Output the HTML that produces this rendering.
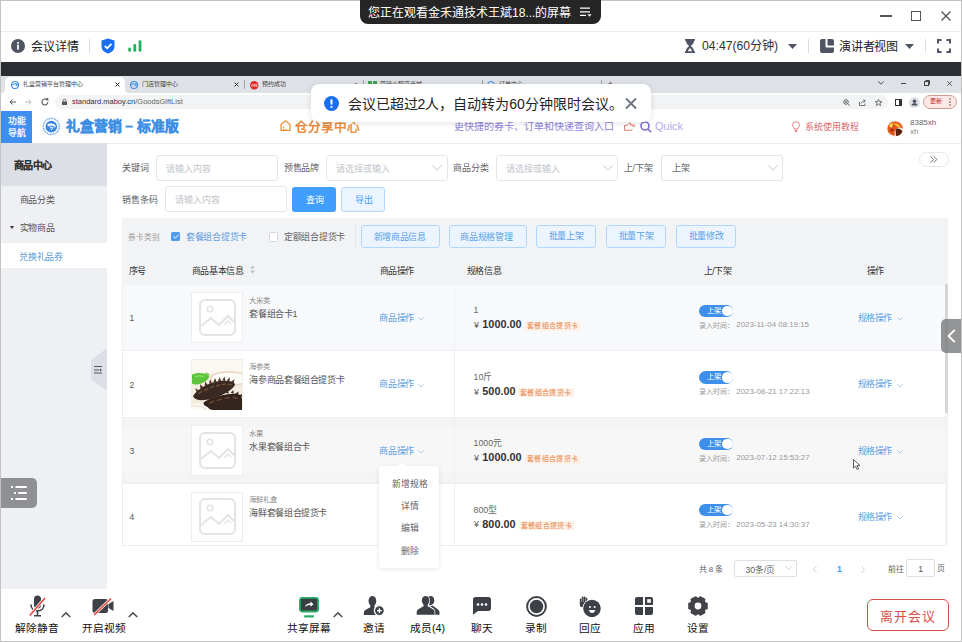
<!DOCTYPE html>
<html lang="zh-CN"><head><meta charset="utf-8">
<style>
*{margin:0;padding:0;box-sizing:border-box}
html,body{width:962px;height:642px;overflow:hidden;background:#fff;font-family:"Liberation Sans",sans-serif;color:#333}
.a{position:absolute}
.t{position:absolute;white-space:nowrap;line-height:1}
svg{position:absolute;overflow:visible}
</style></head><body>
<div class="a" id="root" style="left:0;top:0;width:962px;height:642px;overflow:hidden">

<!-- ===== title bar ===== -->
<div class="a" style="left:0;top:0;width:962px;height:31px;background:#fff"></div>
<div class="a" style="left:0;top:31px;width:962px;height:1px;background:#ececec"></div>
<div class="a" style="left:0;top:0;width:962px;height:1px;background:#c3c3c3"></div>
<div class="a" style="left:360px;top:0;width:241px;height:24px;background:#262626;border-radius:0 0 8px 8px"></div>
<div class="t" id="tabtxt" style="left:368px;top:7.00px;font-size:12px;color:#fff">您正在观看金禾通技术王斌18...的屏幕</div>
<svg style="left:580px;top:7px" width="12" height="10" viewBox="0 0 12 10"><path d="M0 1.2H10M0 4.8H10M0 8.4H6" stroke="#fff" stroke-width="1.3"/><path d="M7.5 7.2L11.5 7.2L9.5 9.8Z" fill="#fff"/></svg>
<!-- window controls -->
<div class="a" style="left:880px;top:15px;width:12px;height:1.5px;background:#555"></div>
<div class="a" style="left:911px;top:11px;width:10px;height:10px;border:1.5px solid #555"></div>
<svg style="left:941px;top:11px" width="10" height="10" viewBox="0 0 10 10"><path d="M0.5 0.5L9.5 9.5M9.5 0.5L0.5 9.5" stroke="#555" stroke-width="1.4"/></svg>

<!-- ===== info bar ===== -->
<svg style="left:11px;top:39px" width="14" height="14" viewBox="0 0 14 14"><circle cx="7" cy="7" r="7" fill="#4f5563"/><rect x="6.1" y="5.6" width="1.8" height="5" fill="#fff"/><rect x="6.1" y="3" width="1.8" height="1.7" fill="#fff"/></svg>
<div class="t" id="huiyi" style="left:31.36px;top:41px;font-size:12px;color:#222;letter-spacing:-0.2px">会议详情</div>
<div class="a" style="left:89px;top:39px;width:1px;height:14px;background:#dcdcdc"></div>
<svg style="left:101px;top:38px" width="14" height="16" viewBox="0 0 14 16"><path d="M7 0.5L13.5 2.5V8.5C13.5 12 10.5 14.5 7 15.5C3.5 14.5 0.5 12 0.5 8.5V2.5Z" fill="#1a6ef2"/><path d="M3.8 8L6.2 10.3L10.4 5.8" stroke="#fff" stroke-width="1.8" fill="none"/></svg>
<svg style="left:128px;top:40px" width="14" height="12" viewBox="0 0 14 12"><rect x="0.2" y="7.5" width="2.8" height="4.3" rx="1.4" fill="#20b25c"/><rect x="5.4" y="4" width="2.8" height="7.8" rx="1.4" fill="#20b25c"/><rect x="10.6" y="0.2" width="2.8" height="11.6" rx="1.4" fill="#20b25c"/></svg>

<svg style="left:685px;top:39px" width="10" height="14" viewBox="0 0 10 14"><path d="M0 0H10V1.8H9C9 5 6.5 6 6 7C6.5 8 9 9 9 12.2H10V14H0V12.2H1C1 9 3.5 8 4 7C3.5 6 1 5 1 1.8H0Z" fill="#4f5563"/><path d="M3 12.2C3.3 10.5 4.5 9.6 5 9.3C5.5 9.6 6.7 10.5 7 12.2Z" fill="#fff"/></svg>
<div class="t" id="timer" style="left:702px;top:40px;font-size:12.2px;color:#333">04:47(60分钟)</div>
<svg style="left:788px;top:44px" width="9" height="5" viewBox="0 0 9 5"><path d="M0 0H9L4.5 5Z" fill="#4f5563"/></svg>
<div class="a" style="left:808px;top:39px;width:1px;height:14px;background:#dcdcdc"></div>
<svg style="left:820px;top:39px" width="14" height="14" viewBox="0 0 14 14"><path d="M2 0H5.5V7.5C5.5 8 6 8.5 6.5 8.5H14V12C14 13.1 13.1 14 12 14H2C0.9 14 0 13.1 0 12V2C0 0.9 0.9 0 2 0Z" fill="#4f5563"/><path d="M7.5 0H12C13.1 0 14 0.9 14 2V6.5H7.5Z" fill="#4f5563"/></svg>
<div class="t" id="speaker" style="left:838.76px;top:40.8px;font-size:12px;color:#222;letter-spacing:-0.1px">演讲者视图</div>
<svg style="left:905px;top:44px" width="9" height="5" viewBox="0 0 9 5"><path d="M0 0H9L4.5 5Z" fill="#4f5563"/></svg>
<div class="a" style="left:925px;top:39px;width:1px;height:14px;background:#dcdcdc"></div>
<svg style="left:937px;top:39px" width="14" height="14" viewBox="0 0 14 14"><path d="M1 4.5V1H4.5M9.5 1H13V4.5M13 9.5V13H9.5M4.5 13H1V9.5" stroke="#4f5563" stroke-width="2" fill="none"/></svg>

<!-- ===== dark bar ===== -->
<div class="a" style="left:0;top:62px;width:962px;height:14px;background:#2a2d31"></div>

<!-- ===== browser ===== -->
<div class="a" style="left:0;top:76px;width:962px;height:17px;background:#dee1e6"></div>
<div class="a" style="left:5px;top:77px;width:120px;height:16px;background:#fff;border-radius:5px 5px 0 0"></div>
<div class="a" style="left:1px;top:87px;width:4px;height:6px;background:#fff"></div>
<div class="a" style="left:1px;top:85px;width:4px;height:8px;background:#dee1e6;border-radius:0 0 4px 0"></div>
<div class="a" style="left:125px;top:87px;width:4px;height:6px;background:#fff"></div>
<div class="a" style="left:125px;top:85px;width:5px;height:8px;background:#dee1e6;border-radius:0 0 0 4px"></div>
<svg style="left:11px;top:81px" width="8" height="8" viewBox="0 0 8 8"><circle cx="4" cy="4" r="3.5" fill="none" stroke="#3b8ee8" stroke-width="1.2"/><path d="M1.5 4.2C2.5 2.5 5 2.3 6.5 3.6L4.6 4.8" stroke="#3b8ee8" stroke-width="1.2" fill="none"/></svg>
<div class="t" id="tab1" style="left:23px;top:81px;font-size:6px;color:#444">礼盒营销平台管理中心</div>
<svg style="left:115px;top:82px" width="5" height="5" viewBox="0 0 5 5"><path d="M0.5 0.5L4.5 4.5M4.5 0.5L0.5 4.5" stroke="#333" stroke-width="1"/></svg>
<svg style="left:130px;top:81px" width="8" height="8" viewBox="0 0 8 8"><circle cx="4" cy="4" r="3.5" fill="none" stroke="#3b8ee8" stroke-width="1.2"/><path d="M1.5 4.2C2.5 2.5 5 2.3 6.5 3.6L4.6 4.8" stroke="#3b8ee8" stroke-width="1.2" fill="none"/></svg>
<div class="t" id="tab2" style="left:142px;top:81px;font-size:6px;color:#444">门店管理中心</div>
<svg style="left:234px;top:82px" width="5" height="5" viewBox="0 0 5 5"><path d="M0.5 0.5L4.5 4.5M4.5 0.5L0.5 4.5" stroke="#333" stroke-width="1"/></svg>
<div class="a" style="left:244px;top:80px;width:1px;height:9px;background:#a0a3a8"></div>
<svg style="left:249.7px;top:80.7px" width="8.5" height="8.5" viewBox="0 0 8.5 8.5"><circle cx="4.25" cy="4.25" r="4.25" fill="#e02b2b"/><path d="M1.8 5.6V3.6M1.8 4C2.2 3.3 3.3 3.3 3.3 4.2V5.6M3.3 4C3.7 3.3 4.8 3.3 4.8 4.2V5.6M7 4.2A1 1 0 1 0 7 4.3V5.6" stroke="#fff" stroke-width="0.6" fill="none"/></svg>
<div class="t" id="tab3" style="left:262px;top:81px;font-size:6px;color:#444">预约成功</div>
<div class="t" style="left:354px;top:81px;font-size:6px;color:#444">×</div>
<div class="a" style="left:363px;top:80px;width:1px;height:9px;background:#a0a3a8"></div>
<svg style="left:368px;top:80.5px" width="9" height="9" viewBox="0 0 9 9"><rect x="0" y="0" width="4" height="4" rx="0.6" fill="#3aa64a"/><rect x="5" y="0" width="4" height="4" rx="0.6" fill="#3aa64a"/><rect x="0" y="5" width="4" height="4" rx="0.6" fill="#3aa64a"/><rect x="5" y="5" width="4" height="4" rx="0.6" fill="#8bc34a"/></svg>
<div class="t" style="left:380px;top:81px;font-size:6px;color:#444">营销小程序商城</div>
<div class="a" style="left:482px;top:80px;width:1px;height:9px;background:#a0a3a8"></div>
<div class="a" style="left:487px;top:81px;width:8px;height:8px;border:1.2px solid #3b8ee8;border-radius:50%"></div>
<div class="t" style="left:499px;top:81px;font-size:6px;color:#444">订单中心</div>
<div class="a" style="left:601px;top:80px;width:1px;height:9px;background:#a0a3a8"></div>
<div class="t" style="left:608px;top:80px;font-size:8px;color:#444">+</div>
<svg style="left:878px;top:81px" width="6" height="4" viewBox="0 0 6 4"><path d="M0.3 0.3L3 3.2L5.7 0.3" stroke="#444" stroke-width="0.9" fill="none"/></svg>
<div class="a" style="left:901px;top:83px;width:5px;height:1px;background:#444"></div>
<svg style="left:924px;top:80px" width="6" height="6" viewBox="0 0 6 6"><rect x="0.5" y="1.5" width="4" height="4" fill="none" stroke="#444" stroke-width="1"/><path d="M1.5 0.5H5.5V4.5" fill="none" stroke="#444" stroke-width="1"/></svg>
<svg style="left:947px;top:81px" width="5" height="5" viewBox="0 0 5 5"><path d="M0.3 0.3L4.7 4.7M4.7 0.3L0.3 4.7" stroke="#444" stroke-width="0.9"/></svg>

<!-- toolbar -->
<div class="a" style="left:0;top:93px;width:962px;height:17px;background:#fff"></div>
<svg style="left:9px;top:99px" width="7" height="6" viewBox="0 0 7 6"><path d="M7 3H1M3.5 0.5L1 3L3.5 5.5" stroke="#555" stroke-width="1" fill="none"/></svg>
<svg style="left:25px;top:99px" width="7" height="6" viewBox="0 0 7 6"><path d="M0 3H6M3.5 0.5L6 3L3.5 5.5" stroke="#bbb" stroke-width="1" fill="none"/></svg>
<svg style="left:40.5px;top:98px" width="8" height="8" viewBox="0 0 8 8"><path d="M6.2 2A3 3 0 1 0 6.9 4.3" stroke="#555" stroke-width="1.1" fill="none"/><path d="M4.4 0.3H7.3V3.2Z" fill="#555"/></svg>
<div class="a" style="left:55px;top:95px;width:833px;height:14px;background:#f1f3f4;border-radius:7px"></div>
<svg style="left:62px;top:99px" width="5" height="6" viewBox="0 0 5 6"><rect x="0" y="2.5" width="5" height="3.5" rx="0.5" fill="#555"/><path d="M1 2.6V1.8A1.5 1.5 0 0 1 4 1.8V2.6" stroke="#555" stroke-width="0.9" fill="none"/></svg>
<div class="t" id="url" style="left:72px;top:98px;font-size:7.5px;color:#333">standard.maboy.cn<span style="color:#666">/GoodsGiftList</span></div>
<svg style="left:843px;top:99px" width="7" height="7" viewBox="0 0 7 7"><circle cx="3" cy="3" r="2.3" stroke="#555" stroke-width="0.9" fill="none"/><path d="M4.7 4.7L6.8 6.8M2 3H4M3 2V4" stroke="#555" stroke-width="0.8"/></svg>
<svg style="left:859px;top:99px" width="7" height="7" viewBox="0 0 7 7"><path d="M0.5 3V6.5H6V4.5M2 4.5C2.5 2.5 4 2 6 2M4.5 0.5L6.3 2L4.5 3.5" stroke="#555" stroke-width="0.8" fill="none"/></svg>
<svg style="left:875px;top:99px" width="7" height="7" viewBox="0 0 7 7"><path d="M3.5 0.3L4.4 2.5L6.8 2.6L4.9 4.1L5.6 6.6L3.5 5.2L1.4 6.6L2.1 4.1L0.2 2.6L2.6 2.5Z" stroke="#555" stroke-width="0.8" fill="none"/></svg>
<svg style="left:895px;top:99px" width="7" height="7" viewBox="0 0 7 7"><rect x="0.5" y="0.5" width="6" height="6" stroke="#333" stroke-width="1" fill="none"/><rect x="4" y="0.5" width="2.5" height="6" fill="#333"/></svg>
<div class="a" style="left:909px;top:96.5px;width:11px;height:11px;background:#dfe1e5;border-radius:50%"></div>
<svg style="left:909px;top:96.5px" width="11" height="11" viewBox="0 0 11 11"><circle cx="5.5" cy="4.2" r="1.8" fill="#4a5160"/><path d="M2.3 8.5C2.8 6.8 4 6.3 5.5 6.3C7 6.3 8.2 6.8 8.7 8.5Z" fill="#4a5160"/></svg>
<div class="a" style="left:923px;top:95px;width:34px;height:14px;background:#fce8e6;border:1px solid #d49a94;border-radius:7px"></div>
<div class="t" style="left:930px;top:98px;font-size:6px;color:#c5221f">更新</div>
<svg style="left:949px;top:98px" width="2" height="8" viewBox="0 0 2 8"><circle cx="1" cy="1" r="0.8" fill="#555"/><circle cx="1" cy="4" r="0.8" fill="#555"/><circle cx="1" cy="7" r="0.8" fill="#555"/></svg>

<!-- page header -->
<div class="a" style="left:0;top:110px;width:962px;height:33px;background:#fff"></div>
<div class="a" style="left:0;top:143px;width:962px;height:1px;background:#e8eaee"></div>
<div class="a" style="left:1px;top:111px;width:31px;height:32px;background:#3e8ef0"></div>
<div class="t" id="gn1" style="left:7.5px;top:116.8px;font-size:8.8px;color:#fff;-webkit-text-stroke:0.25px #fff">功能</div>
<div class="t" id="gn2" style="left:7.5px;top:129.48px;font-size:8.8px;color:#fff;-webkit-text-stroke:0.25px #fff">导航</div>
<svg style="left:41.5px;top:117px" width="19" height="19" viewBox="0 0 19 19"><circle cx="9.3" cy="9.4" r="8" fill="none" stroke="#5d9fe8" stroke-width="1.5" stroke-dasharray="0.9 0.7"/><circle cx="9.3" cy="9.6" r="5.8" fill="#3a87e2"/><path d="M5.2 7.8C6.5 6.3 9.5 5.9 12.2 7.2C13.5 8 14 9.3 13.4 10.6L11.5 9.2C10 8.3 8 8.2 6.2 9.4Z" fill="#fff"/><path d="M7.6 9.6L9.6 13.6L11.6 10.2Z" fill="#fff"/><path d="M8.6 10.4L9.6 12.6L10.6 10.8Z" fill="#3a87e2"/></svg>
<div class="t" id="title" style="left:65.5px;top:120px;font-size:13.8px;font-weight:bold;color:#3e8ee6;-webkit-text-stroke:0.4px #3e8ee6">礼盒营销 – 标准版</div>
<svg style="left:280px;top:120px" width="11" height="11" viewBox="0 0 11 11"><path d="M1 10.5V4.5L5.5 0.8L10 4.5V10.5Z" stroke="#ea8a2e" stroke-width="1.2" fill="none"/><rect x="3" y="6.5" width="1.3" height="1.3" fill="#ea8a2e"/><rect x="3" y="8.8" width="1.3" height="1.3" fill="#ea8a2e"/><rect x="5.3" y="8.8" width="1.3" height="1.3" fill="#ea8a2e"/></svg>
<div class="t" id="cfx" style="left:295px;top:120.5px;font-size:12.6px;font-weight:normal;color:transparent;-webkit-text-stroke:0.35px #ec8b3a;background:linear-gradient(90deg,#e3702c,#f0a244);-webkit-background-clip:text;background-clip:text">仓分享中心</div>
<div class="t" id="kjrk" style="left:454px;top:121.5px;font-size:10px;color:#8d82d8">更快捷的券卡、订单和快递查询入口</div>
<svg style="left:624px;top:122px" width="11" height="9" viewBox="0 0 11 9"><path d="M0.5 3.5H3L5.5 0.8C6.5 0.5 7 1.2 6.5 2.2L6 3H10C10.8 3 10.8 4.3 10 4.3H8.5M0.5 3.5V8.3H7.5C8.3 8.3 8.5 7 7.8 7" stroke="#e06a62" stroke-width="0.9" fill="none"/></svg>
<svg style="left:640px;top:121px" width="12" height="12" viewBox="0 0 12 12"><circle cx="5" cy="5" r="4" stroke="#7a6ed6" stroke-width="1.6" fill="none"/><path d="M8 8L11.2 11.2" stroke="#7a6ed6" stroke-width="1.6"/></svg>
<div class="t" id="quick" style="left:655px;top:121px;font-size:11px;color:#b3aaea">Quick</div>
<svg style="left:792px;top:122px" width="8" height="10" viewBox="0 0 8 10"><path d="M2.3 7C2.3 5.5 0.6 4.8 0.6 3.2A3.4 3.4 0 0 1 7.4 3.2C7.4 4.8 5.7 5.5 5.7 7Z" stroke="#e07070" stroke-width="0.9" fill="none"/><path d="M2.5 8.3H5.5M3 9.5H5" stroke="#e07070" stroke-width="0.9"/></svg>
<div class="t" id="xtjc" style="left:805.40px;top:123.30px;font-size:9px;color:#d9686a">系统使用教程</div>
<svg style="left:884.5px;top:119.5px" width="20" height="17" viewBox="0 0 20 17"><circle cx="10" cy="8.5" r="8.2" fill="#f3e6da"/><path d="M2.5 9C2.5 4.5 6 1.2 10.5 1.4C14.5 1.6 17.8 4.5 17.8 8.8C16.5 7.5 14.5 7 12.5 7.8C10 8.8 9 11.5 10 15.5C6 15.5 2.5 13 2.5 9Z" fill="#e2561c"/><path d="M8.5 3.5C11 2.8 14.5 4 15.8 6.5L12 7Z" fill="#f8b030"/><path d="M10.5 9C13 8 16 9 17.5 11.5C16 14.5 13.5 16 11 16Z" fill="#5a1e0c"/><path d="M4 6C5 4 7 3 8.5 3.5L6.5 8Z" fill="#fcd860"/><circle cx="7" cy="10" r="1.8" fill="#b03010"/></svg>
<div class="t" id="u1" style="left:910px;top:118.5px;font-size:8px;color:#666">8385xh</div>
<div class="t" id="u2" style="left:910px;top:128px;font-size:8px;color:#888">xh</div>

<!-- sidebar -->
<div class="a" style="left:1px;top:143px;width:106px;height:446px;background:#eff0f3"></div>
<div class="a" style="left:1px;top:143px;width:106px;height:43px;background:#dcdfe6"></div>
<div class="t" id="sbh" style="left:13.5px;top:161.3px;font-size:10px;font-weight:bold;color:#333;letter-spacing:-0.4px;-webkit-text-stroke:0.05px #333">商品中心</div>
<div class="t" id="sb1" style="left:19.5px;top:196px;font-size:9px;color:#555;letter-spacing:-0.3px">商品分类</div>
<svg style="left:10px;top:226px" width="4" height="3" viewBox="0 0 4 3"><path d="M0 0H4L2 3Z" fill="#333"/></svg>
<div class="t" id="sb2" style="left:19.5px;top:223.5px;font-size:9px;color:#555;letter-spacing:-0.3px">实物商品</div>
<div class="a" style="left:1px;top:243px;width:106px;height:25px;background:#fff"></div>
<div class="t" id="sb3" style="left:19.24px;top:252.5px;font-size:9px;color:#5b9bd9;letter-spacing:-0.25px">兑换礼品券</div>
<svg style="left:91px;top:348px" width="16" height="43" viewBox="0 0 16 43"><path d="M16 0V43L0 31.5V12Z" fill="#dcdfe6"/><path d="M3 18.5H11M3 22H8.5M3 25H11" stroke="#555" stroke-width="1.2"/><path d="M9 20.5L11 22L9 23.5Z" fill="#555"/></svg>
<div class="a" style="left:1px;top:478px;width:36px;height:30px;background:#8e9093;border-radius:0 5px 5px 0"></div>
<svg style="left:10px;top:486px" width="18" height="14" viewBox="0 0 18 14"><rect x="1" y="0" width="2" height="2" fill="#fff"/><rect x="5.2" y="0" width="11.8" height="2" rx="1" fill="#fff"/><rect x="4" y="6" width="2" height="2" fill="#fff"/><rect x="8" y="6" width="9" height="2" rx="1" fill="#fff"/><rect x="1" y="12" width="2" height="2" fill="#fff"/><rect x="5.2" y="12" width="11.8" height="2" rx="1" fill="#fff"/></svg>

<!-- ===== filters ===== -->
<div class="t" id="f1" style="left:122px;top:164.10px;font-size:9px;color:#606266">关键词</div>
<div class="a" style="left:156px;top:155px;width:122px;height:26px;border:1px solid #e2e5ea;border-radius:3px;background:#fff"></div>
<div class="t" id="ph1" style="left:166px;top:164.5px;font-size:9px;color:#c0c4cc">请输入内容</div>
<div class="t" id="f2" style="left:284px;top:164.18px;font-size:9px;color:#606266;letter-spacing:-0.4px">预售品牌</div>
<div class="a" style="left:326px;top:155px;width:122px;height:26px;border:1px solid #e2e5ea;border-radius:3px;background:#fff"></div>
<div class="t" id="ph2" style="left:336px;top:164.5px;font-size:9px;color:#c0c4cc">请选择或输入</div>
<svg style="left:432px;top:165px" width="10" height="6" viewBox="0 0 10 6"><path d="M0.4 0.4L5 5.2L9.6 0.4" stroke="#c0c4cc" stroke-width="0.9" fill="none"/></svg>
<div class="t" id="f3" style="left:453px;top:164.18px;font-size:9px;color:#606266">商品分类</div>
<div class="a" style="left:496px;top:155px;width:122px;height:26px;border:1px solid #e2e5ea;border-radius:3px;background:#fff"></div>
<div class="t" id="ph3" style="left:506px;top:164.5px;font-size:9px;color:#c0c4cc">请选择或输入</div>
<svg style="left:603px;top:165px" width="10" height="6" viewBox="0 0 10 6"><path d="M0.4 0.4L5 5.2L9.6 0.4" stroke="#c0c4cc" stroke-width="0.9" fill="none"/></svg>
<div class="t" id="f4" style="left:623.5px;top:163.5px;font-size:9px;color:#606266">上/下架</div>
<div class="a" style="left:661px;top:155px;width:122px;height:26px;border:1px solid #e2e5ea;border-radius:3px;background:#fff"></div>
<div class="t" id="ph4" style="left:671.5px;top:163.5px;font-size:9px;color:#606266">上架</div>
<svg style="left:768px;top:165px" width="10" height="6" viewBox="0 0 10 6"><path d="M0.4 0.4L5 5.2L9.6 0.4" stroke="#c0c4cc" stroke-width="0.9" fill="none"/></svg>
<div class="a" style="left:919px;top:152px;width:30px;height:15px;border:1px solid #e4e7ed;border-radius:8px;background:#fff"></div>
<svg style="left:930px;top:156px" width="8" height="7" viewBox="0 0 8 7"><path d="M0.5 0.3L3.5 3.5L0.5 6.7M3.8 0.3L6.8 3.5L3.8 6.7" stroke="#666" stroke-width="0.9" fill="none"/></svg>

<div class="t" id="f5" style="left:122px;top:196.08px;font-size:9px;color:#606266">销售条码</div>
<div class="a" style="left:165px;top:186px;width:122px;height:26px;border:1px solid #e2e5ea;border-radius:3px;background:#fff"></div>
<div class="t" id="ph5" style="left:175px;top:195.5px;font-size:9px;color:#c0c4cc">请输入内容</div>
<div class="a" style="left:292px;top:187px;width:44px;height:25px;background:#409eff;border-radius:3px"></div>
<div class="t" id="b1" style="left:305.5px;top:195.5px;font-size:9px;color:#fff">查询</div>
<div class="a" style="left:341px;top:187px;width:44px;height:25px;background:#ecf5ff;border:1px solid #b3d8ff;border-radius:3px"></div>
<div class="t" id="b2" style="left:354.5px;top:195.5px;font-size:9px;color:#409eff">导出</div>

<!-- ===== gray panel ===== -->
<div class="a" style="left:122px;top:218px;width:826px;height:67px;background:#f2f3f5"></div>
<div class="t" id="qk" style="left:128px;top:233.60px;font-size:7.6px;color:#9a9a9a">券卡类别</div>
<div class="a" style="left:171px;top:232px;width:8.5px;height:8.5px;background:#4f9bec;border-radius:1.5px"></div>
<svg style="left:172.5px;top:233.5px" width="6" height="5" viewBox="0 0 6 5"><path d="M0.5 2.5L2.3 4.2L5.5 0.8" stroke="#fff" stroke-width="0.9" fill="none"/></svg>
<div class="t" id="ck1" style="left:186px;top:232.5px;font-size:9px;color:#5d9de2;letter-spacing:-0.3px">套餐组合提货卡</div>
<div class="a" style="left:268.5px;top:232px;width:9.5px;height:9.5px;background:#fff;border:1px solid #d4d7de;border-radius:1.5px"></div>
<div class="t" id="ck2" style="left:284px;top:232.5px;font-size:9px;color:#606266;letter-spacing:-0.3px">定额组合提货卡</div>
<div class="a" style="left:354.5px;top:225px;width:1px;height:22px;background:#e4e7ed"></div>
<div class="a" style="left:360.5px;top:225px;width:79px;height:23px;background:#ecf5ff;border:1px solid #b3d8ff;border-radius:3px"></div>
<div class="t" id="bb1" style="left:373.5px;top:233.10px;font-size:9px;color:#5a9fe6;letter-spacing:-0.3px">新增商品信息</div>
<div class="a" style="left:448.5px;top:225px;width:78px;height:23px;background:#ecf5ff;border:1px solid #b3d8ff;border-radius:3px"></div>
<div class="t" id="bb2" style="left:460.32px;top:233.10px;font-size:9px;color:#5a9fe6;letter-spacing:-0.3px">商品规格管理</div>
<div class="a" style="left:535.5px;top:225px;width:60px;height:23px;background:#ecf5ff;border:1px solid #b3d8ff;border-radius:3px"></div>
<div class="t" id="bb3" style="left:548.5px;top:232.3px;font-size:9px;color:#5a9fe6;letter-spacing:-0.3px">批量上架</div>
<div class="a" style="left:605.5px;top:225px;width:60px;height:23px;background:#ecf5ff;border:1px solid #b3d8ff;border-radius:3px"></div>
<div class="t" id="bb4" style="left:618.5px;top:232.3px;font-size:9px;color:#5a9fe6;letter-spacing:-0.3px">批量下架</div>
<div class="a" style="left:675.5px;top:225px;width:60px;height:23px;background:#ecf5ff;border:1px solid #b3d8ff;border-radius:3px"></div>
<div class="t" id="bb5" style="left:688.5px;top:232.3px;font-size:9px;color:#5a9fe6;letter-spacing:-0.3px">批量修改</div>

<div class="t" id="h1" style="left:128.5px;top:266.5px;font-size:9px;color:#333;letter-spacing:-0.3px">序号</div>
<div class="t" id="h2" style="left:191.5px;top:266.5px;font-size:9px;color:#333;letter-spacing:-0.3px">商品基本信息</div>
<svg style="left:249.5px;top:265px" width="5" height="9" viewBox="0 0 5 9"><path d="M0 3.6L2.5 0.3L5 3.6Z" fill="#c0c4cc"/><path d="M0 5.4L2.5 8.7L5 5.4Z" fill="#c0c4cc"/></svg>
<div class="t" id="h3" style="left:379.5px;top:266.5px;font-size:9px;color:#333;letter-spacing:-0.4px">商品操作</div>
<div class="t" id="h4" style="left:466.5px;top:267.34px;font-size:9px;color:#333;letter-spacing:-0.3px">规格信息</div>
<div class="t" id="h5" style="left:703.5px;top:266.5px;font-size:9px;color:#333;letter-spacing:-0.3px">上/下架</div>
<div class="t" id="h6" style="left:866.5px;top:267.10px;font-size:9px;color:#333;letter-spacing:-0.3px">操作</div>

<!-- ===== rows ===== -->
<div class="a" style="left:122px;top:285px;width:823px;height:66px;background:#f8f9fb;border-bottom:1px solid #edeef1"></div>
<div class="a" style="left:454px;top:285px;width:1px;height:66px;background:#eef0f4"></div>
<div class="t" id="r1_num" style="left:129.5px;top:314.0px;font-size:8.5px;color:#555">1</div>
<div class="a" style="left:191px;top:292.3px;width:51.5px;height:50.5px;background:#fff;border:1px solid #eceef1"></div>
<svg style="left:199px;top:298.8px" width="37" height="37" viewBox="0 0 37 37"><rect x="1" y="1" width="35" height="35" rx="5" fill="none" stroke="#e3e3e3" stroke-width="2"/><circle cx="11" cy="10" r="2.8" fill="none" stroke="#e3e3e3" stroke-width="1.6"/><path d="M2 27L12 19L20 26L29 17L35 23" fill="none" stroke="#e3e3e3" stroke-width="2"/><path d="M25 26L29 22L32 25" fill="none" stroke="#e3e3e3" stroke-width="1.4"/></svg>
<div class="t" id="r1_cat" style="left:249.3px;top:296.6px;font-size:7.3px;color:#8a8a8a">大米类</div>
<div class="t" id="r1_name" style="left:249.3px;top:309.5px;font-size:9px;letter-spacing:-0.35px;color:#555">套餐组合卡1</div>
<div class="t" id="r1_op" style="left:379.3px;top:313.6px;font-size:9px;letter-spacing:-0.35px;color:#5b9de3">商品操作</div>
<svg style="left:418.3px;top:317.0px" width="6" height="3.5" viewBox="0 0 6 3.5"><path d="M0.3 0.3L3 3L5.7 0.3" stroke="#8ab8ea" stroke-width="0.7" fill="none"/></svg>
<div class="t" id="r1_spec" style="left:473.5px;top:306.3px;font-size:8.8px;color:#666">1</div>
<div class="t" id="r1_yen" style="left:474px;top:321.0px;font-size:8.8px;color:#555">¥</div>
<div class="t" id="r1_price" style="left:482.3px;top:319.3px;font-size:10.9px;font-weight:bold;color:#333">1000.00</div>
<div class="a" style="left:525px;top:321.6px;width:55.5px;height:9px;background:#fdf1e8;border-radius:1px"></div>
<div class="t" id="r1_tag" style="left:527px;top:322.40000000000003px;font-size:7px;letter-spacing:0.35px;color:#e4864a">套餐组合提货卡</div>
<div class="a" style="left:699px;top:304.5px;width:34px;height:12.5px;background:#3e8fea;border-radius:6.5px"></div>
<div class="t" id="r1_sw" style="left:706.5px;top:306.5px;font-size:7.4px;color:#fff">上架</div>
<div class="a" style="left:722px;top:305.5px;width:10.5px;height:10.5px;background:#fff;border-radius:50%"></div>
<div class="t" id="r1_date" style="left:698.5px;top:321.6px;font-size:7px;color:#999">录入时间：<span style="position:absolute;left:37.8px;top:-0.3px;font-size:7.9px">2023-11-04 08:19:15</span></div>
<div class="t" id="r1_op2" style="left:857.5px;top:313.6px;font-size:9px;letter-spacing:-0.35px;color:#5b9de3">规格操作</div>
<svg style="left:897px;top:317.0px" width="6" height="3.5" viewBox="0 0 6 3.5"><path d="M0.3 0.3L3 3L5.7 0.3" stroke="#8ab8ea" stroke-width="0.7" fill="none"/></svg>
<div class="a" style="left:122px;top:351px;width:823px;height:67px;background:#ffffff;border-bottom:1px solid #edeef1"></div>
<div class="a" style="left:454px;top:351px;width:1px;height:67px;background:#eef0f4"></div>
<div class="t" id="r2_num" style="left:129.5px;top:380.59999999999997px;font-size:8.5px;color:#555">2</div>
<div class="a" style="left:191px;top:358.9px;width:51.5px;height:50.5px;background:#fff;border:1px solid #eceef1"></div>
<svg style="left:191.8px;top:359.9px;overflow:hidden" width="50" height="50" viewBox="0 0 51 51"><rect width="51" height="51" fill="#f5eee0"/><rect width="51" height="13" fill="#fbf8f1"/><ellipse cx="38" cy="19" rx="19" ry="7" fill="#fffdf8" stroke="#e6dac2" stroke-width="1.8"/><path d="M0 15C4 13 9 13 13 14C16 12 19 15 17 18C15 22 10 24 5 25C3 25 1 25 0 24Z" fill="#5cc43c"/><path d="M3 17C6 16 9 16 12 17M14 13L17 16" stroke="#8fe068" stroke-width="1.2" fill="none"/><path d="M14.5 39.5L14.8 35.6L17.5 38.5Z" fill="#3d2a22"/><path d="M19.4 37.3L20.4 33.5L22.6 36.7Z" fill="#3d2a22"/><path d="M24.4 35.5L26.0 31.9L27.6 35.5Z" fill="#3d2a22"/><path d="M29.4 34.4L31.3 30.9L32.6 34.6Z" fill="#3d2a22"/><path d="M34.4 33.7L36.6 30.5L37.6 34.3Z" fill="#3d2a22"/><path d="M39.5 33.5L42.2 30.6L42.5 34.5Z" fill="#3d2a22"/><path d="M44.2 34.1L47.6 32.1L46.8 35.9Z" fill="#3d2a22"/><path d="M48.0 35.8L51.8 34.7L50.0 38.2Z" fill="#3d2a22"/><path d="M12 43C20 38 34 34 45 34.5C50 35 51 38 51 41V51H22C15 50 11 47 12 43Z" fill="#33241e"/><path d="M18 44L22 42M26 41L30 40M34 39L38 38.5M42 38L46 39" stroke="#6a4632" stroke-width="1.6" stroke-linecap="round"/><path d="M4.8 33.0L3.3 28.8L7.2 31.0Z" fill="#4a3329"/><path d="M8.5 29.2L8.2 24.7L11.5 27.8Z" fill="#4a3329"/><path d="M13.0 26.4L13.4 21.9L16.0 25.6Z" fill="#4a3329"/><path d="M17.4 24.3L18.3 19.9L20.6 23.7Z" fill="#4a3329"/><path d="M21.9 22.5L23.5 18.3L25.1 22.5Z" fill="#4a3329"/><path d="M26.4 21.4L28.4 17.3L29.6 21.6Z" fill="#4a3329"/><path d="M30.9 20.7L33.2 16.9L34.1 21.3Z" fill="#4a3329"/><path d="M35.5 21.0L38.4 17.6L38.5 22.0Z" fill="#4a3329"/><path d="M39.7 22.1L43.4 19.6L42.3 23.9Z" fill="#4a3329"/><path d="M1 37C5 30 16 23.5 28 21.5C35 20.5 41 21 44 24.5C43 30 32 36 20 39.5C11 42 3 41.5 1 37Z" fill="#3a2923"/><path d="M7 34L10 32M13 31L16 29.5M19 28L22 27M25 26.5L28 25.5M31 25L34 24.5M37 25L40 25" stroke="#6e4a34" stroke-width="1.7" stroke-linecap="round"/><path d="M0 45C7 43 14 45 19 51H0Z" fill="#fdfbf6"/><path d="M0 47C6 46 12 48 15 51" stroke="#e2d6bf" stroke-width="1" fill="none"/></svg>
<div class="t" id="r2_cat" style="left:249.3px;top:363.2px;font-size:7.3px;color:#8a8a8a">海参类</div>
<div class="t" id="r2_name" style="left:249.3px;top:376.09999999999997px;font-size:9px;letter-spacing:-0.35px;color:#555">海参商品套餐组合提货卡</div>
<div class="t" id="r2_op" style="left:379.3px;top:380.2px;font-size:9px;letter-spacing:-0.35px;color:#5b9de3">商品操作</div>
<svg style="left:418.3px;top:383.59999999999997px" width="6" height="3.5" viewBox="0 0 6 3.5"><path d="M0.3 0.3L3 3L5.7 0.3" stroke="#8ab8ea" stroke-width="0.7" fill="none"/></svg>
<div class="t" id="r2_spec" style="left:473.5px;top:372.9px;font-size:8.8px;color:#666">10斤</div>
<div class="t" id="r2_yen" style="left:474px;top:387.59999999999997px;font-size:8.8px;color:#555">¥</div>
<div class="t" id="r2_price" style="left:482.3px;top:385.9px;font-size:10.9px;font-weight:bold;color:#333">500.00</div>
<div class="a" style="left:518px;top:388.2px;width:55.5px;height:9px;background:#fdf1e8;border-radius:1px"></div>
<div class="t" id="r2_tag" style="left:520px;top:389.0px;font-size:7px;letter-spacing:0.35px;color:#e4864a">套餐组合提货卡</div>
<div class="a" style="left:699px;top:371.09999999999997px;width:34px;height:12.5px;background:#3e8fea;border-radius:6.5px"></div>
<div class="t" id="r2_sw" style="left:706.5px;top:373.09999999999997px;font-size:7.4px;color:#fff">上架</div>
<div class="a" style="left:722px;top:372.09999999999997px;width:10.5px;height:10.5px;background:#fff;border-radius:50%"></div>
<div class="t" id="r2_date" style="left:698.5px;top:388.2px;font-size:7px;color:#999">录入时间：<span style="position:absolute;left:37.8px;top:-0.3px;font-size:7.9px">2023-08-21 17:22:13</span></div>
<div class="t" id="r2_op2" style="left:857.5px;top:380.2px;font-size:9px;letter-spacing:-0.35px;color:#5b9de3">规格操作</div>
<svg style="left:897px;top:383.59999999999997px" width="6" height="3.5" viewBox="0 0 6 3.5"><path d="M0.3 0.3L3 3L5.7 0.3" stroke="#8ab8ea" stroke-width="0.7" fill="none"/></svg>
<div class="a" style="left:122px;top:418px;width:823px;height:66px;background:#f7f7f8;border-bottom:1px solid #edeef1"></div><div class="a" style="left:122px;top:418px;width:823px;height:10px;background:#f4f4f5"></div><div class="a" style="left:122px;top:473px;width:823px;height:10px;background:#f4f4f5"></div>
<div class="a" style="left:454px;top:418px;width:1px;height:66px;background:#eef0f4"></div>
<div class="t" id="r3_num" style="left:129.5px;top:447.0px;font-size:8.5px;color:#555">3</div>
<div class="a" style="left:191px;top:425.3px;width:51.5px;height:50.5px;background:#fff;border:1px solid #eceef1"></div>
<svg style="left:199px;top:431.8px" width="37" height="37" viewBox="0 0 37 37"><rect x="1" y="1" width="35" height="35" rx="5" fill="none" stroke="#e3e3e3" stroke-width="2"/><circle cx="11" cy="10" r="2.8" fill="none" stroke="#e3e3e3" stroke-width="1.6"/><path d="M2 27L12 19L20 26L29 17L35 23" fill="none" stroke="#e3e3e3" stroke-width="2"/><path d="M25 26L29 22L32 25" fill="none" stroke="#e3e3e3" stroke-width="1.4"/></svg>
<div class="t" id="r3_cat" style="left:249.3px;top:429.6px;font-size:7.3px;color:#8a8a8a">水果</div>
<div class="t" id="r3_name" style="left:249.3px;top:442.5px;font-size:9px;letter-spacing:-0.35px;color:#555">水果套餐组合卡</div>
<div class="t" id="r3_op" style="left:379.3px;top:446.6px;font-size:9px;letter-spacing:-0.35px;color:#5b9de3">商品操作</div>
<svg style="left:418.3px;top:450.0px" width="6" height="3.5" viewBox="0 0 6 3.5"><path d="M0.3 0.3L3 3L5.7 0.3" stroke="#8ab8ea" stroke-width="0.7" fill="none"/></svg>
<div class="t" id="r3_spec" style="left:473.5px;top:439.3px;font-size:8.8px;color:#666">1000元</div>
<div class="t" id="r3_yen" style="left:474px;top:454.0px;font-size:8.8px;color:#555">¥</div>
<div class="t" id="r3_price" style="left:482.3px;top:452.3px;font-size:10.9px;font-weight:bold;color:#333">1000.00</div>
<div class="a" style="left:525px;top:454.6px;width:55.5px;height:9px;background:#fdf1e8;border-radius:1px"></div>
<div class="t" id="r3_tag" style="left:527px;top:455.40000000000003px;font-size:7px;letter-spacing:0.35px;color:#e4864a">套餐组合提货卡</div>
<div class="a" style="left:699px;top:437.5px;width:34px;height:12.5px;background:#3e8fea;border-radius:6.5px"></div>
<div class="t" id="r3_sw" style="left:706.5px;top:439.5px;font-size:7.4px;color:#fff">上架</div>
<div class="a" style="left:722px;top:438.5px;width:10.5px;height:10.5px;background:#fff;border-radius:50%"></div>
<div class="t" id="r3_date" style="left:698.5px;top:454.6px;font-size:7px;color:#999">录入时间：<span style="position:absolute;left:37.8px;top:-0.3px;font-size:7.9px">2023-07-12 15:53:27</span></div>
<div class="t" id="r3_op2" style="left:857.5px;top:446.6px;font-size:9px;letter-spacing:-0.35px;color:#5b9de3">规格操作</div>
<svg style="left:897px;top:450.0px" width="6" height="3.5" viewBox="0 0 6 3.5"><path d="M0.3 0.3L3 3L5.7 0.3" stroke="#8ab8ea" stroke-width="0.7" fill="none"/></svg>
<div class="a" style="left:122px;top:484px;width:823px;height:62px;background:#ffffff;border-bottom:1px solid #edeef1"></div>
<div class="a" style="left:454px;top:484px;width:1px;height:62px;background:#eef0f4"></div>
<div class="t" id="r4_num" style="left:129.5px;top:513.4000000000001px;font-size:8.5px;color:#555">4</div>
<div class="a" style="left:191px;top:491.70000000000005px;width:51.5px;height:50.5px;background:#fff;border:1px solid #eceef1"></div>
<svg style="left:199px;top:498.20000000000005px" width="37" height="37" viewBox="0 0 37 37"><rect x="1" y="1" width="35" height="35" rx="5" fill="none" stroke="#e3e3e3" stroke-width="2"/><circle cx="11" cy="10" r="2.8" fill="none" stroke="#e3e3e3" stroke-width="1.6"/><path d="M2 27L12 19L20 26L29 17L35 23" fill="none" stroke="#e3e3e3" stroke-width="2"/><path d="M25 26L29 22L32 25" fill="none" stroke="#e3e3e3" stroke-width="1.4"/></svg>
<div class="t" id="r4_cat" style="left:249.3px;top:496.00000000000006px;font-size:7.3px;color:#8a8a8a">海鲜礼盒</div>
<div class="t" id="r4_name" style="left:249.3px;top:508.90000000000003px;font-size:9px;letter-spacing:-0.35px;color:#555">海鲜套餐组合提货卡</div>
<div class="t" id="r4_op" style="left:379.3px;top:513.0px;font-size:9px;letter-spacing:-0.35px;color:#5b9de3">商品操作</div>
<svg style="left:418.3px;top:516.4000000000001px" width="6" height="3.5" viewBox="0 0 6 3.5"><path d="M0.3 0.3L3 3L5.7 0.3" stroke="#8ab8ea" stroke-width="0.7" fill="none"/></svg>
<div class="t" id="r4_spec" style="left:473.5px;top:505.70000000000005px;font-size:8.8px;color:#666">800型</div>
<div class="t" id="r4_yen" style="left:474px;top:520.4000000000001px;font-size:8.8px;color:#555">¥</div>
<div class="t" id="r4_price" style="left:482.3px;top:518.7px;font-size:10.9px;font-weight:bold;color:#333">800.00</div>
<div class="a" style="left:518.5px;top:521.0px;width:55.5px;height:9px;background:#fdf1e8;border-radius:1px"></div>
<div class="t" id="r4_tag" style="left:520.5px;top:521.8000000000001px;font-size:7px;letter-spacing:0.35px;color:#e4864a">套餐组合提货卡</div>
<div class="a" style="left:699px;top:503.90000000000003px;width:34px;height:12.5px;background:#3e8fea;border-radius:6.5px"></div>
<div class="t" id="r4_sw" style="left:706.5px;top:505.90000000000003px;font-size:7.4px;color:#fff">上架</div>
<div class="a" style="left:722px;top:504.90000000000003px;width:10.5px;height:10.5px;background:#fff;border-radius:50%"></div>
<div class="t" id="r4_date" style="left:698.5px;top:521.0px;font-size:7px;color:#999">录入时间：<span style="position:absolute;left:37.8px;top:-0.3px;font-size:7.9px">2023-05-23 14:30:37</span></div>
<div class="t" id="r4_op2" style="left:857.5px;top:513.0px;font-size:9px;letter-spacing:-0.35px;color:#5b9de3">规格操作</div>
<svg style="left:897px;top:516.4000000000001px" width="6" height="3.5" viewBox="0 0 6 3.5"><path d="M0.3 0.3L3 3L5.7 0.3" stroke="#8ab8ea" stroke-width="0.7" fill="none"/></svg>
<div class="a" style="left:122px;top:546px;width:827px;height:13px;background:#fff"></div><div class="a" style="left:122px;top:285px;width:1px;height:261px;background:#edeef1"></div>

<!-- scrollbar -->
<div class="a" style="left:945px;top:284px;width:3px;height:261px;background:#f2f3f5"></div>
<div class="a" style="left:945px;top:284px;width:3px;height:129px;background:#d5d6d8"></div>

<!-- popup -->
<div class="a" style="left:379px;top:466px;width:60px;height:102px;background:#fff;border-radius:3px;box-shadow:0 1px 5px rgba(0,0,0,0.10)"></div>
<svg style="left:396px;top:462px" width="12" height="5" viewBox="0 0 12 5"><path d="M0 5L6 0.5L12 5Z" fill="#fff"/></svg>
<div class="t" id="pm1" style="left:392px;top:479.8px;font-size:8.8px;color:#606266">新增规格</div>
<div class="t" id="pm2" style="left:401px;top:502.3px;font-size:8.8px;color:#606266">详情</div>
<div class="t" id="pm3" style="left:401px;top:524.3px;font-size:8.8px;color:#606266">编辑</div>
<div class="t" id="pm4" style="left:401px;top:546.80px;font-size:8.8px;color:#606266">删除</div>

<!-- pagination -->
<div class="t" id="pg1" style="left:698.5px;top:565.5px;font-size:8px;color:#606266">共 8 条</div>
<div class="a" style="left:734px;top:560px;width:63px;height:17px;border:1px solid #dcdfe6;border-radius:2px;background:#fff"></div>
<div class="t" id="pg2" style="left:745.5px;top:565.60px;font-size:8.6px;color:#606266">30条/页</div>
<svg style="left:785px;top:566px" width="7" height="4" viewBox="0 0 7 4"><path d="M0.3 0.3L3.5 3.5L6.7 0.3" stroke="#c0c4cc" stroke-width="0.8" fill="none"/></svg>
<svg style="left:813px;top:566px" width="4" height="7" viewBox="0 0 4 7"><path d="M3.5 0.3L0.5 3.5L3.5 6.7" stroke="#c0c4cc" stroke-width="0.8" fill="none"/></svg>
<div class="t" id="pg3" style="left:837px;top:565px;font-size:8.8px;font-weight:bold;color:#409eff">1</div>
<svg style="left:861px;top:566px" width="4" height="7" viewBox="0 0 4 7"><path d="M0.5 0.3L3.5 3.5L0.5 6.7" stroke="#c0c4cc" stroke-width="0.8" fill="none"/></svg>
<div class="t" id="pg4" style="left:887.5px;top:565.80px;font-size:8px;color:#606266">前往</div>
<div class="a" style="left:906px;top:559px;width:28.5px;height:17.5px;border:1px solid #dcdfe6;border-radius:2px;background:#fff"></div>
<div class="t" id="pg5" style="left:918px;top:564.3px;font-size:9.5px;color:#606266">1</div>
<div class="t" id="pg6" style="left:937px;top:565.30px;font-size:8px;color:#606266">页</div>

<!-- ===== bottom toolbar ===== -->
<div class="a" style="left:0;top:589px;width:962px;height:53px;background:#fff"></div>
<svg style="left:29px;top:595px" width="17" height="22" viewBox="0 0 17 22"><rect x="5" y="0.5" width="7" height="13" rx="3.5" fill="#3d4047"/><path d="M2 9.5C2 13.5 4.8 15.8 8.5 15.8C12.2 15.8 15 13.5 15 9.5" stroke="#3d4047" stroke-width="1.6" fill="none"/><path d="M8.5 16V20.5M5 20.8H12" stroke="#3d4047" stroke-width="1.6"/><path d="M0.8 20.5L16 3" stroke="#fff" stroke-width="3"/><path d="M0.8 20.5L16 3" stroke="#e8413c" stroke-width="1.5"/></svg>
<svg style="left:61px;top:612px" width="10" height="6" viewBox="0 0 10 6"><path d="M0.7 5L5 0.9L9.3 5" stroke="#4a4d54" stroke-width="1.5" fill="none"/></svg>
<div class="t" id="bt1" style="left:14.5px;top:622.8px;font-size:10.7px;color:#111">解除静音</div>
<svg style="left:92px;top:597px" width="23" height="19" viewBox="0 0 23 19"><rect x="0.5" y="2" width="15.5" height="14" rx="2.5" fill="#3d4047"/><path d="M16.5 7L21.5 4V14L16.5 11Z" fill="#3d4047"/><path d="M2 18L19 1.5" stroke="#fff" stroke-width="3"/><path d="M2 18L19 1.5" stroke="#e8413c" stroke-width="1.5"/></svg>
<svg style="left:128px;top:612px" width="10" height="6" viewBox="0 0 10 6"><path d="M0.7 5L5 0.9L9.3 5" stroke="#4a4d54" stroke-width="1.5" fill="none"/></svg>
<div class="t" id="bt2" style="left:82px;top:622.8px;font-size:10.7px;color:#111">开启视频</div>

<svg style="left:299px;top:596.5px" width="20" height="21" viewBox="0 0 20 21"><rect x="0.9" y="0.9" width="18.2" height="13.6" rx="2.2" fill="#3a3d42" stroke="#2aae67" stroke-width="1.8"/><path d="M6 10C6.5 7.5 8.5 6.3 11.5 6.3V4.5L14.5 7.2L11.5 9.8V8C9.5 8 7.5 8.6 6 10Z" fill="#fff"/><rect x="5" y="18.3" width="10" height="2.2" rx="1" fill="#2aae67"/></svg>
<svg style="left:333px;top:612px" width="10" height="6" viewBox="0 0 10 6"><path d="M0.7 5L5 0.9L9.3 5" stroke="#4a4d54" stroke-width="1.5" fill="none"/></svg>
<div class="t" id="bt3" style="left:287px;top:622.8px;font-size:10.7px;color:#111">共享屏幕</div>
<svg style="left:363px;top:596px" width="22" height="20" viewBox="0 0 22 20"><ellipse cx="9.4" cy="5" rx="3.9" ry="5" fill="#3d4047"/><rect x="7.3" y="7" width="4.2" height="6" fill="#3d4047"/><path d="M0.8 19V17C0.8 15.8 1.4 14.8 2.4 14.1L6.8 11.4H12L16 13.8V19Z" fill="#3d4047"/><circle cx="16.4" cy="14.6" r="5" fill="#3d4047" stroke="#fff" stroke-width="1.3"/><path d="M16.4 12.2V17M14 14.6H18.8" stroke="#fff" stroke-width="1.4"/></svg>
<div class="t" id="bt4" style="left:363px;top:622.8px;font-size:10.7px;color:#111">邀请</div>
<svg style="left:416.5px;top:596px" width="23" height="19" viewBox="0 0 23 19"><ellipse cx="13.5" cy="4.6" rx="3.8" ry="4.6" fill="#3d4047"/><path d="M9 11.5L12.5 9.5C13.5 10.5 14.5 10.5 15.5 9.5L21 13.5C22 14.3 22.5 15.5 22.5 16.5V18.8H12Z" fill="#3d4047"/><path d="M8.6 -0.65C11.3 -0.65 13.05 1.6 13.05 4.6C13.05 6.5 12.5 8 11.8 9.4L16.6 12.6C17.6 13.3 18.25 14.6 18.25 16V19.5H-0.95V16C-0.95 14.6 -0.3 13.3 0.7 12.6L5.4 9.4C4.7 8 4.15 6.5 4.15 4.6C4.15 1.6 5.9 -0.65 8.6 -0.65Z" fill="#fff"/><ellipse cx="8.6" cy="4.6" rx="3.8" ry="4.6" fill="#3d4047"/><rect x="6.5" y="7" width="4.2" height="5" fill="#3d4047"/><path d="M-0.3 18.8V16.3C-0.3 15.1 0.3 14 1.3 13.3L6 10.6H11.2L16 13.3C17 14 17.6 15.1 17.6 16.3V18.8Z" fill="#3d4047"/></svg>
<div class="t" id="bt5" style="left:410px;top:622.8px;font-size:10.7px;color:#111">成员(4)</div>
<svg style="left:473px;top:597px" width="18" height="18" viewBox="0 0 18 18"><path d="M2.5 0H15.5C16.9 0 18 1.1 18 2.5V11.5C18 12.9 16.9 14 15.5 14H5L0 17.8V2.5C0 1.1 1.1 0 2.5 0Z" fill="#3d4047"/><circle cx="5" cy="7.5" r="1.3" fill="#fff"/><circle cx="9" cy="7.5" r="1.3" fill="#fff"/><circle cx="13" cy="7.5" r="1.3" fill="#fff"/></svg>
<div class="t" id="bt6" style="left:470.5px;top:622.8px;font-size:10.7px;color:#111">聊天</div>
<svg style="left:526px;top:595.5px" width="21" height="21" viewBox="0 0 21 21"><circle cx="10.5" cy="10.5" r="9.4" fill="none" stroke="#3d4047" stroke-width="2"/><circle cx="10.5" cy="10.5" r="6.8" fill="#3d4047"/></svg>
<div class="t" id="bt7" style="left:524.5px;top:622.8px;font-size:10.7px;color:#111">录制</div>
<svg style="left:579px;top:595.5px" width="23" height="22" viewBox="0 0 23 22"><g fill="#3d4047"><rect x="0.9" y="2.4" width="1.6" height="7" rx="0.8"/><rect x="2.8" y="0.6" width="1.7" height="8" rx="0.85"/><rect x="4.8" y="0.5" width="1.7" height="8" rx="0.85"/><rect x="6.7" y="1.8" width="1.6" height="7" rx="0.8"/><path d="M0.9 6H8.3L9 9L7 11.3H3.2C1.9 11.3 0.9 10.3 0.9 9Z"/></g><circle cx="13" cy="12.4" r="9.55" fill="#fff"/><circle cx="13" cy="12.4" r="8.75" fill="#3d4047"/><circle cx="11" cy="11" r="1" fill="#fff"/><circle cx="15.6" cy="11" r="1" fill="#fff"/><path d="M9.8 14C10.4 16 11.6 16.9 13.1 16.9C14.6 16.9 15.8 16 16.4 14Z" fill="#fff"/></svg>
<div class="t" id="bt8" style="left:579px;top:622.8px;font-size:10.7px;color:#111">回应</div>
<svg style="left:635px;top:597px" width="18" height="18" viewBox="0 0 18 18"><path d="M2 0H8V8H0V2C0 0.9 0.9 0 2 0Z" fill="#3d4047"/><path d="M0 10H8V18H2C0.9 18 0 17.1 0 16Z" fill="#3d4047"/><path d="M10 10H18V16C18 17.1 17.1 18 16 18H10Z" fill="#3d4047"/><path d="M10 0H16C17.1 0 18 0.9 18 2V8H10Z" fill="#3d4047"/><rect x="12.2" y="2.2" width="3.6" height="3.6" fill="#fff"/></svg>
<div class="t" id="bt9" style="left:633px;top:623.44px;font-size:10.7px;color:#111">应用</div>
<svg style="left:688.2px;top:595.5px" width="20" height="20" viewBox="0 0 20 20"><g transform="translate(10,10)" fill="#414348"><circle r="8.6"/><rect x="-3.6" y="-9.8" width="7.2" height="5" rx="1.4" transform="rotate(30)"/><rect x="-3.6" y="-9.8" width="7.2" height="5" rx="1.4" transform="rotate(90)"/><rect x="-3.6" y="-9.8" width="7.2" height="5" rx="1.4" transform="rotate(150)"/><rect x="-3.6" y="-9.8" width="7.2" height="5" rx="1.4" transform="rotate(210)"/><rect x="-3.6" y="-9.8" width="7.2" height="5" rx="1.4" transform="rotate(270)"/><rect x="-3.6" y="-9.8" width="7.2" height="5" rx="1.4" transform="rotate(330)"/></g><circle cx="10" cy="10" r="3.4" fill="#fff"/></svg>
<div class="t" id="bt10" style="left:686.5px;top:622.8px;font-size:10.7px;color:#111">设置</div>
<div class="a" style="left:867px;top:599px;width:82px;height:32px;border:1.3px solid #d4524c;border-radius:6px;background:#fff"></div>
<div class="t" id="leave" style="left:880px;top:609.6px;font-size:13px;color:#d8504b;letter-spacing:0.9px">离开会议</div>

<!-- right floating button -->
<div class="a" style="left:941px;top:319px;width:21px;height:34px;background:rgba(120,122,125,0.8);border-radius:5px 0 0 5px"></div>
<svg style="left:946.5px;top:329px" width="9" height="14" viewBox="0 0 9 14"><path d="M7.8 0.8L1.5 7L7.8 13.2" stroke="#fff" stroke-width="1.8" fill="none"/></svg>

<!-- cursor -->
<svg style="left:853px;top:459px" width="8" height="11" viewBox="0 0 8 11"><path d="M0.5 0.5V9L2.6 7.2L4.2 10.5L5.6 9.8L4 6.6H7Z" fill="#fff" stroke="#333" stroke-width="0.8"/></svg>

<!-- ===== toast ===== -->
<div class="a" style="left:311px;top:84px;width:340px;height:38px;background:#fff;border-radius:8px;box-shadow:0 1px 6px rgba(0,0,0,0.12)"></div>
<svg style="left:323.5px;top:96px" width="15" height="15" viewBox="0 0 15 15"><circle cx="7.5" cy="7.5" r="7.5" fill="#1a6ef2"/><rect x="6.5" y="3.2" width="2" height="5.5" rx="0.8" fill="#fff"/><circle cx="7.5" cy="11" r="1.1" fill="#fff"/></svg>
<div class="t" id="toast" style="left:347.5px;top:97px;font-size:14px;color:#222">会议已超过2人，自动转为60分钟限时会议。</div>
<svg style="left:625px;top:97.5px" width="12" height="11" viewBox="0 0 12 11"><path d="M1 0.5L11 10.5M11 0.5L1 10.5" stroke="#6b7280" stroke-width="1.8"/></svg>

<!-- window border -->
<div class="a" style="left:0;top:0;width:962px;height:642px;border:1px solid #c3c3c3;border-top:none"></div>

</div>
</body></html>
